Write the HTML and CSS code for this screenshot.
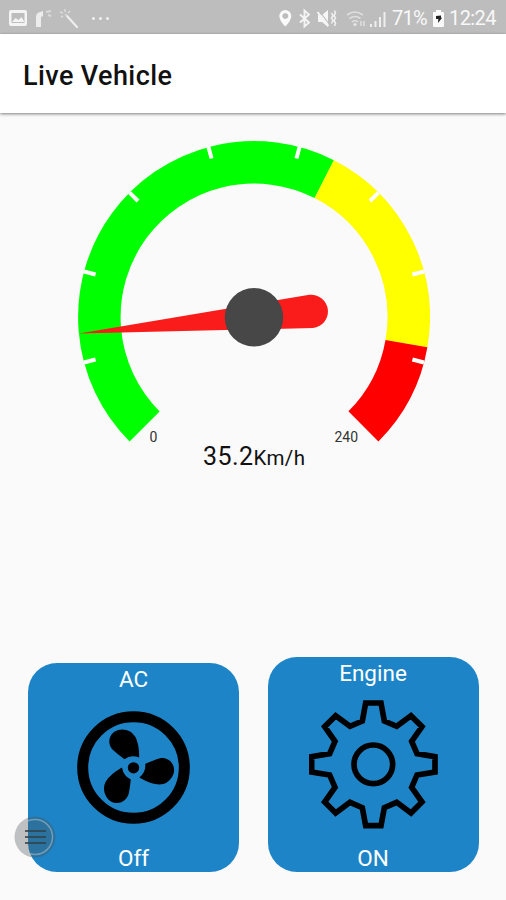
FILE: index.html
```html
<!DOCTYPE html>
<html lang="en">
<head>
  <meta charset="UTF-8">
  <title>Live Vehicle</title>
  <meta name="viewport" content="width=device-width, initial-scale=1.0">
  <link rel="stylesheet" href="styles.css">
</head>
<body>
<div class="status-bar">
  <svg class="status-left" width="104" height="34" viewBox="0 0 104 34">
    <path fill="#f4f4f4" fill-rule="evenodd" d="M11 9h14q2 0 2 2v12q0 2-2 2h-14q-2 0-2-2v-12q0-2 2-2zM11.500 12v10h13v-10z"/>
    <path fill="#f4f4f4" d="M12 21l3.500-4 3 2 3-3 3 5z"/>
    <path fill="#ececec" d="M36 26v-10q0-4 4-5l3-1v5l-2 1v10z"/>
    <path stroke="#dadada" stroke-width="2" fill="none" d="M46 11l5-1M48 14l3 1"/>
    <path stroke="#ededed" stroke-width="2.200" stroke-linecap="round" d="M67 15l10 11"/>
    <path stroke="#dcdcdc" stroke-width="1.500" fill="none" d="M60 11l3 1M65 8v3M70 10l-2 2M61 16l2-1M65 13l2 2"/>
    <g fill="#f1f1f1">
      <circle cx="93.500" cy="17.500" r="1.500"/>
      <circle cx="100.500" cy="17.500" r="1.500"/>
    </g>
  </svg>
  <svg class="status-dot" width="8" height="34" viewBox="0 0 8 34">
    <circle cx="3.500" cy="17.500" r="1.500" fill="#f1f1f1"/>
  </svg>
  <svg class="status-right" width="113" height="34" viewBox="277 0 113 34">
    <path fill="#fafafa" fill-rule="evenodd" d="M285.300 9a6 6 0 0 1 6 6q0 4.500-6 10.500-6-6-6-10.500a6 6 0 0 1 6-6zM285.300 12a3 3 0 1 0 .01 0z"/>
    <path stroke="#f4f4f4" stroke-width="1.900" fill="none" d="M300 13.500l9 8-4.500 4v-16l4.500 4-9 8"/>
    <path fill="#f6f6f6" d="M318 14h4l6-5v17l-6-5h-4z"/>
    <path stroke="#bdbdbd" stroke-width="1.200" d="M319 10l11 14"/>
    <path stroke="#f4f4f4" stroke-width="2" d="M317.500 11l11 14"/>
    <path stroke="#eeeeee" stroke-width="1.600" fill="none" d="M331.500 12l1.500 2.500-1.500 2.500 1.500 2.500-1.500 3M334.500 9.500l1 2.500-1.500 2.500 1.500 2.500-1.500 2.500 1.500 2.500-1 3"/>
    <g stroke="#dedede" stroke-width="1.600" fill="none">
      <path d="M347 14q8-6 16 0M349.500 17.500q5.500-4 11 0M352 21q3-2.500 6 0"/>
      <path d="M361 20v5M364 20v5"/>
    </g>
    <circle cx="355" cy="23.500" r="1.600" fill="#e6e6e6"/>
    <g fill="#eeeeee">
      <path d="M370 23h2v3h-2zM374.500 20h2v6h-2zM379 16h2v10h-2zM383.500 11h2v15h-2z"/>
    </g>
  </svg>
  <span class="battery-level">71%</span>
  <svg class="battery" width="11" height="34" viewBox="0 0 11 34">
    <path fill="#fafafa" d="M3 9h5v2h2q1 0 1 1v13q0 1-1 1h-9q-1 0-1-1v-13q0-1 1-1h2z"/>
    <path fill="#222" d="M3 15l5-.5v2l1 .5-4 5 .3-4h-2.300z"/>
  </svg>
  <span class="clock">12:24</span>
</div>

<header class="app-bar">
  <h1>Live Vehicle</h1>
</header>

<main class="content">
  <div class="gauge">
    <svg class="gauge-dial" width="352" height="304" viewBox="0 0 352 304">
      <g fill="none" stroke-width="42.500">
        <path class="zone-green" d="M66.600 285.400A154.750 154.750 0 0 1 246.260 38.120"/>
        <path class="zone-yellow" d="M246.260 38.120A154.750 154.750 0 0 1 328.440 202.600"/>
        <path class="zone-red" d="M328.440 202.600A154.750 154.750 0 0 1 285.400 285.400"/>
      </g>
      <g class="ticks">
        <path d="M340 176h12" transform="rotate(15 176 176)"/>
        <path d="M340 176h12" transform="rotate(-15 176 176)"/>
        <path d="M340 176h12" transform="rotate(-45 176 176)"/>
        <path d="M340 176h12" transform="rotate(-75 176 176)"/>
        <path d="M340 176h12" transform="rotate(-105 176 176)"/>
        <path d="M340 176h12" transform="rotate(-135 176 176)"/>
        <path d="M340 176h12" transform="rotate(-165 176 176)"/>
        <path d="M340 176h12" transform="rotate(-195 176 176)"/>
      </g>
      <path class="needle" d="M1 192.500L231.500 153.800A16.600 16.600 0 1 1 235 187Z"/>
      <circle class="hub" cx="176" cy="176.300" r="29.200"/>
      <text class="limit" x="75.500" y="300.500" text-anchor="middle">0</text>
      <text class="limit" x="268.300" y="300.500" text-anchor="middle">240</text>
    </svg>
    <div class="reading">35.2<span class="unit">Km/h</span></div>
  </div>

  <div class="cards">
    <div class="card card-ac">
      <span>AC</span>
      <svg width="113" height="113" viewBox="233 183 338 338">
        <circle cx="402" cy="352" r="152" fill="none" stroke="#000" stroke-width="33"/>
        <g>
          <path id="blade" d="M419 322Q420 238 368 238C334 238 318 274 340 299Q350 309 375 327Q394 313 419 322Z"/>
          <use href="#blade" transform="rotate(120 402 352)"/>
          <use href="#blade" transform="rotate(240 402 352)"/>
        </g>
        <circle cx="402" cy="353" r="17"/>
      </svg>
      <span>Off</span>
    </div>
    <div class="card card-engine">
      <span>Engine</span>
      <svg width="129" height="129" viewBox="157 149 387 387">
        <g fill="none" stroke="#000" stroke-width="17">
          <path d="M327 158H373L383 212 420 228 463 196 496 229 465 273 481 310 535 319V365L481 374 465 411 496 455 463 488 420 456 383 472 373 526H327L317 472 280 456 237 488 204 455 235 411 219 374 165 365V319L219 310 235 273 204 229 237 196 280 228 317 212Z"/>
          <circle cx="350" cy="342" r="58"/>
        </g>
      </svg>
      <span>ON</span>
    </div>
  </div>
</main>

<!-- floating menu -->
<div class="float-menu">
  <svg width="42" height="42" viewBox="0 0 42 42">
    <circle cx="21" cy="21" r="20.500" fill="#4b4b4b" fill-opacity=".33"/>
    <circle cx="21" cy="21" r="17.500" fill="none" stroke="#b5c5cf" stroke-opacity=".5" stroke-width="1.500"/>
    <path stroke="#30414b" stroke-opacity=".8" stroke-width="2" d="M11 15h21M11 21h21M11 27h21"/>
  </svg>
</div>
</body>
</html>
```
FILE: styles.css
```css
* {
  box-sizing: border-box;
}
body {
  margin: 0;
  height: 900px;
  display: flex;
  flex-direction: column;
  background: #fafafa;
  font-family: Roboto, sans-serif;
  color: #111;
  overflow: hidden;
}

/* Status bar */
.status-bar {
  display: flex;
  align-items: center;
  height: 34px;
  padding-top: 1px;
  background: #bdbdbd;
  color: #f8f8f8;
  font-size: 20px;
}
.status-bar svg {
  flex: none;
}
.status-right {
  margin-left: 165px;
}
.battery-level {
  width: 41px;
  margin-left: 2px;
  letter-spacing: -0.8px;
}
.clock {
  margin-left: 5px;
  letter-spacing: -0.6px;
}

/* Title bar */
.app-bar {
  display: flex;
  align-items: center;
  height: 79px;
  padding: 4px 23px 0;
  background: #fff;
  box-shadow: 0 1px 3px rgba(0,0,0,0.5);
}
.app-bar h1 {
  margin: 0;
  font-size: 27px;
  font-weight: 500;
  letter-spacing: 0.4px;
}

.content {
  flex: 1;
  display: flex;
  flex-direction: column;
  justify-content: space-between;
  padding: 27.500px 27.500px 28px 28px;
}

/* Speed gauge */
.gauge {
  display: flex;
  flex-direction: column;
  align-items: center;
}
.gauge-dial {
  display: block;
  margin-left: 1px;
}
.zone-green {
  stroke: #00ff00;
}
.zone-yellow {
  stroke: #ffff00;
}
.zone-red {
  stroke: #ff0000;
}
.ticks {
  stroke: #fff;
  stroke-width: 4;
}
.needle {
  fill: #f91c1a;
}
.hub {
  fill: #474747;
}
.limit {
  font-size: 14px;
  fill: #333;
}
.reading {
  margin-left: 2px;
  margin-top: -1px;
  font-size: 25px;
  line-height: 25px;
  letter-spacing: 0.4px;
}
.unit {
  font-size: 20.500px;
}

/* Cards */
.cards {
  display: flex;
  align-items: flex-end;
  justify-content: space-between;
}
.card {
  display: flex;
  flex-direction: column;
  align-items: center;
  justify-content: space-between;
  width: 211px;
  padding: 3px 0 1px;
  border-radius: 29px;
  background: #1d85c7;
  color: #fff;
  font-size: 22.500px;
  line-height: 26px;
}
.card svg {
  margin-top: -2px;
}
.card-ac {
  height: 209px;
}
.card-engine {
  height: 215px;
}

.float-menu {
  position: absolute;
  left: 14px;
  top: 816px;
  width: 42px;
  height: 42px;
}
```
